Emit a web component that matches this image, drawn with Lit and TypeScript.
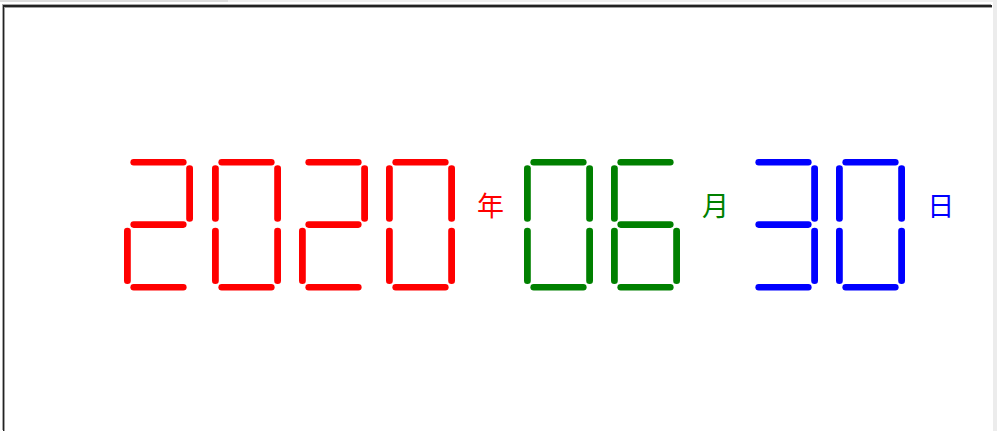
import { LitElement, html, css, svg } from "lit";
import { customElement, property } from "lit/decorators.js";

// Segment order: a top, b upper right, c lower right, d bottom, e lower left, f upper left, g middle
const SEGMENTS: Record<string, string> = {
  "0": "abcdef",
  "2": "abdeg",
  "3": "abcdg",
  "6": "acdefg",
};

const SHAPES: Record<string, [number, number, number, number]> = {
  a: [6.4, -0.1, 56.2, 6.6],
  b: [62.2, 6.3, 6.8, 56.4],
  c: [62.2, 68.7, 6.8, 56.4],
  d: [6.4, 125, 56.2, 6.6],
  e: [0, 68.7, 6.8, 56.4],
  f: [0, 6.3, 6.8, 56.4],
  g: [6.4, 62.3, 56.2, 6.6],
};

@customElement("seg-digit")
class SegDigit extends LitElement {
  @property() value = "0";

  static styles = css`
    :host {
      display: block;
      width: 69px;
      height: 132px;
      flex: none;
    }
    svg {
      display: block;
      fill: currentColor;
      overflow: visible;
    }
  `;

  render() {
    const on = SEGMENTS[this.value] ?? "";
    return html`<svg width="69" height="132" viewBox="0 0 69 132">
      ${[...on].map((s) => {
        const [x, y, w, h] = SHAPES[s];
        return svg`<rect x=${x} y=${y} width=${w} height=${h} rx="3.3" ry="3.3"></rect>`;
      })}
    </svg>`;
  }
}

@customElement("app-root")
class AppRoot extends LitElement {
  static styles = css`
    :host {
      display: block;
      width: 997px;
      height: 431px;
      overflow: hidden;
      background: #fff;
      font-family: "Noto Sans CJK SC", "Liberation Sans", sans-serif;
    }
    .shell {
      display: flex;
      flex-direction: column;
      position: relative;
      background: #fff;
    }
    .strip {
      height: 2px;
      background: linear-gradient(to right, #dcdcdc 228px, #efefef 228px);
    }
    .gap {
      height: 3px;
    }
    .window {
      box-sizing: border-box;
      width: 989px;
      height: 426px;
      margin-left: 3px;
      border-top: 2px solid #222;
      border-left: 1px solid #222;
      box-shadow: -1px -1px 0 #a8a8a8, inset 1px 1px 0 #a0a0a0;
      padding: 151.7px 0 0 120.2px;
      display: flex;
    }
    .rail {
      position: absolute;
      top: 0;
      right: 0;
      bottom: 0;
      width: 4px;
      background: #ececec;
    }
    .date {
      display: flex;
      gap: 18.35px;
    }
    .unit {
      box-sizing: border-box;
      width: 32px;
      padding-left: 2px;
      margin-top: 28px;
      font-size: 27px;
      line-height: 36px;
      text-align: center;
      white-space: nowrap;
    }
    .red {
      color: #f00;
    }
    .green {
      color: #008000;
    }
    .blue {
      color: #00f;
    }
  `;

  private parts = [
    { digits: "2020", unit: "年", tone: "red" },
    { digits: "06", unit: "月", tone: "green" },
    { digits: "30", unit: "日", tone: "blue" },
  ];

  render() {
    return html`<div class="shell">
      <div class="strip"></div>
      <div class="gap"></div>
      <div class="window">
        <div class="date">
          ${this.parts.map((p) =>
            [...p.digits]
              .map((d) => html`<seg-digit class=${p.tone} value=${d}></seg-digit>`)
              .concat(html`<div class="unit ${p.tone}">${p.unit}</div>`)
          )}
        </div>
      </div>
      <div class="rail"></div>
    </div>`;
  }
}
